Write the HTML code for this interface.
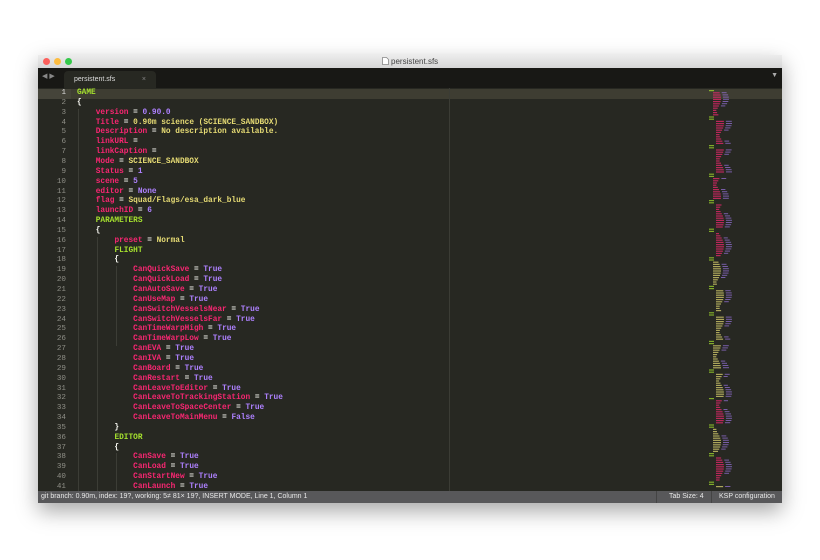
<!DOCTYPE html>
<html><head><style>
body{margin:0;width:820px;height:560px;background:#fff;position:relative;overflow:hidden;font-family:"Liberation Sans",sans-serif}
#win{position:absolute;left:38px;top:55px;width:744px;height:448px;background:#272822;box-shadow:0 8px 20px rgba(0,0,0,.35)}
#title{position:absolute;left:0;top:0;width:744px;height:13px;background:linear-gradient(#ececec,#d6d6d6);text-align:center;font-size:8px;line-height:13px;color:#444}
.dot{position:absolute;top:3px;width:7px;height:7px;border-radius:50%}
#tabs{position:absolute;left:0;top:13px;width:744px;height:20px;background:#181815}
#tab{position:absolute;left:26px;top:3px;width:92px;height:17px;background:#272822;border-radius:4px 4px 0 0;color:#ddd;font-size:7px;line-height:17px}
#ed{position:absolute;left:0;top:33px;width:744px;height:403px;background:#272822;overflow:hidden}
.ln{position:absolute;left:0;width:28px;text-align:right;color:#8f8f87;font:7.6px/9.85px "Liberation Mono",monospace}
.cd{position:absolute;left:39px;white-space:pre;color:#f8f8f2;font:bold 7.8px/9.85px "Liberation Mono",monospace}
.k{color:#f92672}.p{color:#ae81ff}.y{color:#e6db74}.g{color:#a6e22e}
#status{position:absolute;left:0;top:436px;width:744px;height:12px;background:#58585a;color:#e8e8e8;font-size:7px;line-height:12px}
.g1{position:absolute;width:1px;background:#3c3d36}
</style></head><body>
<div id="win">
<div id="title"><div class="dot" style="left:5px;background:#fc605c"></div><div class="dot" style="left:16px;background:#fdbc40"></div><div class="dot" style="left:27px;background:#34c84a"></div><svg width="7" height="8" style="vertical-align:-1px"><path d="M0.5 0.5h4l2 2v5h-6z" fill="#fff" stroke="#888" stroke-width="0.8"/></svg> persistent.sfs</div>
<div id="tabs"><span style="position:absolute;left:4px;top:4px;color:#888;font-size:7px">◀ ▶</span><div id="tab"><span style="margin-left:10px">persistent.sfs</span><span style="position:absolute;right:10px;color:#888">×</span></div><span style="position:absolute;right:4px;top:4px;color:#aaa;font-size:7px">▼</span></div>
<div id="ed">
<div style="position:absolute;left:0;top:1px;width:744px;height:10px;background:#3e3d32"></div>
<div style="position:absolute;left:0;top:1px;width:33px;height:10px;background:#45443a"></div>
<div style="position:absolute;left:411px;top:0;width:1px;height:403px;background:#3b3c35"></div>
<div class="g1" style="left:40px;top:21px;height:382px"></div>
<div class="g1" style="left:59px;top:149px;height:254px"></div>
<div class="g1" style="left:78px;top:178px;height:80px"></div>
<div class="g1" style="left:78px;top:365px;height:40px"></div>
<div id="code"></div>
<svg style="position:absolute;left:670px;top:0" width="40" height="403">
<g id="mm"></g></svg>
</div>
<div id="status"><span style="margin-left:3px">git branch: 0.90m, index: 19?, working: 5≠ 81× 19?, INSERT MODE, Line 1, Column 1</span>
<span style="position:absolute;left:618px;top:0;height:12px;border-left:1px solid #444"></span>
<span style="position:absolute;left:631px">Tab Size: 4</span>
<span style="position:absolute;left:673px;top:0;height:12px;border-left:1px solid #444"></span>
<span style="position:absolute;left:681px">KSP configuration</span></div>
</div>
<script>
var L=[
'<span class="g">GAME</span>','{',
'    <span class="k">version</span> = <span class="p">0.90.0</span>',
'    <span class="k">Title</span> = <span class="y">0.90m science (SCIENCE_SANDBOX)</span>',
'    <span class="k">Description</span> = <span class="y">No description available.</span>',
'    <span class="k">linkURL</span> = ',
'    <span class="k">linkCaption</span> = ',
'    <span class="k">Mode</span> = <span class="y">SCIENCE_SANDBOX</span>',
'    <span class="k">Status</span> = <span class="p">1</span>',
'    <span class="k">scene</span> = <span class="p">5</span>',
'    <span class="k">editor</span> = <span class="p">None</span>',
'    <span class="k">flag</span> = <span class="y">Squad/Flags/esa_dark_blue</span>',
'    <span class="k">launchID</span> = <span class="p">6</span>',
'    <span class="g">PARAMETERS</span>','    {',
'        <span class="k">preset</span> = <span class="y">Normal</span>',
'        <span class="g">FLIGHT</span>','        {'];
var t=['CanQuickSave','CanQuickLoad','CanAutoSave','CanUseMap','CanSwitchVesselsNear','CanSwitchVesselsFar','CanTimeWarpHigh','CanTimeWarpLow','CanEVA','CanIVA','CanBoard','CanRestart','CanLeaveToEditor','CanLeaveToTrackingStation','CanLeaveToSpaceCenter','CanLeaveToMainMenu'];
t.forEach(function(s,i){L.push('            <span class="k">'+s+'</span> = <span class="p">'+(i==15?'False':'True')+'</span>')});
L.push('        }','        <span class="g">EDITOR</span>','        {');
['CanSave','CanLoad','CanStartNew','CanLaunch'].forEach(function(s){L.push('            <span class="k">'+s+'</span> = <span class="p">True</span>')});
var h='';L.forEach(function(s,i){var y=(1+i*9.85).toFixed(2);h+='<div class="ln" style="top:'+y+'px'+(i==0?';color:#ddd':'')+'">'+(i+1)+'</div><div class="cd" style="top:'+y+'px">'+s+'</div>'});
document.getElementById('code').innerHTML=h;
var m='';
for(var y=2;y<400;y+=2.2){var r=Math.abs(Math.sin(y*1.3));var blk=Math.floor(y/28);var head=(y%28<4);var ind=head?1:(blk%3==0?5:8);
var c=head?'#a6e22e':(y<170?'#f92672':(y<300?'#e6db74':(blk%2?'#f92672':'#e6db74')));
var w=head?5:(3+r*5);
m+='<rect x="'+ind+'" y="'+y.toFixed(1)+'" width="'+w.toFixed(1)+'" height="1.2" fill="'+c+'" opacity=".7"/>';
if(!head&&r>.5)m+='<rect x="'+(ind+w+2).toFixed(1)+'" y="'+y.toFixed(1)+'" width="'+(2+r*4).toFixed(1)+'" height="1" fill="#ae81ff" opacity=".6"/>';}
document.getElementById('mm').innerHTML=m;
</script>
</body></html>
